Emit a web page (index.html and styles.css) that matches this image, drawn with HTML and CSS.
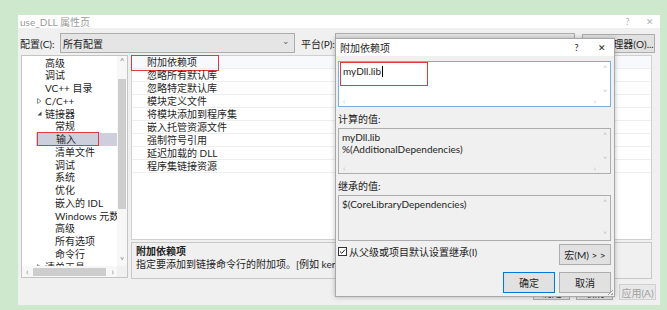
FILE: index.html
```html
<!DOCTYPE html>
<html lang="zh-CN">
<head>
    <meta charset="UTF-8">
    <title>use_DLL 属性页</title>
    <link rel="stylesheet" href="styles.css">
</head>
<body>

    <div class="window">
        <div class="titlebar">
            <span class="title">use_DLL 属性页</span>
            <span class="tb-btn">?</span>
            <span class="tb-btn close">✕</span>
        </div>

        <div class="config-row">
            <span class="cfg-label">配置(C):</span>
            <div class="combo cfg-combo">所有配置<span class="combo-arrow">⌄</span></div>
            <span class="plat-label">平台(P):</span>
            <div class="combo plat-combo">活动(Win32)</div>
            <div class="btn mgr-btn">配置管理器(O)...</div>
        </div>

        <div class="main">
            <div class="tree">
                <div class="tree-items">
                    <div class="ti l1">高级</div>
                    <div class="ti l1">调试</div>
                    <div class="ti l1">VC++ 目录</div>
                    <div class="ti l0"><span class="tw"><svg width="5" height="6" viewBox="0 0 5 6"><path d="M0.5 0.5 L4 3 L0.5 5.5 Z" fill="none" stroke="#777" stroke-width="0.8"/></svg></span>C/C++</div>
                    <div class="ti l0"><span class="tw"><svg width="5" height="5" viewBox="0 0 5 5"><path d="M4.5 0.5 L4.5 4.5 L0.5 4.5 Z" fill="#444"/></svg></span>链接器</div>
                    <div class="ti l2">常规</div>
                    <div class="ti l2 sel"><span class="mark-sel">输入</span></div>
                    <div class="ti l2">清单文件</div>
                    <div class="ti l2">调试</div>
                    <div class="ti l2">系统</div>
                    <div class="ti l2">优化</div>
                    <div class="ti l2">嵌入的 IDL</div>
                    <div class="ti l2">Windows 元数据</div>
                    <div class="ti l2">高级</div>
                    <div class="ti l2">所有选项</div>
                    <div class="ti l2">命令行</div>
                    <div class="ti l0"><span class="tw"><svg width="5" height="6" viewBox="0 0 5 6"><path d="M0.5 0.5 L4 3 L0.5 5.5 Z" fill="none" stroke="#777" stroke-width="0.8"/></svg></span>清单工具</div>
                </div>
                <div class="vscroll">
                    <span class="sa">˄</span>
                    <div class="vthumb"></div>
                    <span class="sa">˅</span>
                </div>
                <div class="hscroll">
                    <span class="sa">‹</span>
                    <div class="hthumb"></div>
                    <span class="sa">›</span>
                </div>
                <div class="corner"></div>
            </div>

            <div class="props">
                <div class="grid">
                    <div class="row first"><span class="name">附加依赖项</span><span class="mark-row"></span></div>
                    <div class="row"><span class="name">忽略所有默认库</span></div>
                    <div class="row"><span class="name">忽略特定默认库</span></div>
                    <div class="row"><span class="name">模块定义文件</span></div>
                    <div class="row"><span class="name">将模块添加到程序集</span></div>
                    <div class="row"><span class="name">嵌入托管资源文件</span></div>
                    <div class="row"><span class="name">强制符号引用</span></div>
                    <div class="row"><span class="name">延迟加载的 DLL</span></div>
                    <div class="row"><span class="name">程序集链接资源</span></div>
                </div>
                <div class="desc">
                    <div class="desc-title">附加依赖项</div>
                    <div class="desc-text">指定要添加到链接命令行的附加项。[例如 kernel32.lib]</div>
                </div>
            </div>
        </div>

        <div class="bottom-row">
            <div class="btn small-btn">确定</div>
            <div class="btn small-btn">取消</div>
            <div class="btn small-btn disabled">应用(A)</div>
        </div>
    </div>

    <!-- modal dialog over the property page -->
    <div class="dialog">
        <div class="dlg-title">
            <span class="title">附加依赖项</span>
            <span class="dlg-btn">?</span>
            <span class="dlg-btn">✕</span>
        </div>
        <div class="dlg-body">
            <div class="box edit">
                <div class="box-text"><span class="mark-edit">myDll.lib<span class="caret"></span></span></div>
                <span class="arr up">˄</span>
                <span class="arr down">˅</span>
                <span class="arr left">‹</span>
                <span class="arr right">›</span>
            </div>

            <div class="dlg-label">计算的值:</div>
            <div class="box readonly">
                <div class="box-text">myDll.lib<br>%(AdditionalDependencies)</div>
                <span class="arr up">˄</span>
                <span class="arr down">˅</span>
                <span class="arr left">‹</span>
                <span class="arr right">›</span>
            </div>

            <div class="dlg-label">继承的值:</div>
            <div class="box readonly">
                <div class="box-text">$(CoreLibraryDependencies)</div>
                <span class="arr up">˄</span>
                <span class="arr down down-end">˅</span>
            </div>

            <div class="inherit-row">
                <label class="check">
                    <svg width="9" height="9" viewBox="0 0 9 9"><rect x="0.5" y="0.5" width="8" height="8" fill="#fff" stroke="#333"/><path d="M2 4.6 L3.8 6.3 L7 2.6" fill="none" stroke="#222" stroke-width="1"/></svg>
                    从父级或项目默认设置继承(I)
                </label>
                <div class="btn dlg-btn-wide">宏(M) &gt; &gt;</div>
            </div>

            <div class="dlg-actions">
                <div class="btn dlg-btn-wide default">确定</div>
                <div class="btn dlg-btn-wide">取消</div>
            </div>
        </div>
        <span class="grip"></span>
    </div>

</body>
</html>
```

FILE: styles.css
```css
* {
    margin: 0;
    padding: 0;
    box-sizing: border-box;
}

body {
    width: 667px;
    height: 310px;
    overflow: hidden;
    position: relative;
    background: #cde8cd;
    font-family: Lato, "Noto Sans CJK SC", sans-serif;
    font-size: 10px;
    color: #1e1e1e;
    padding: 15px 0 0 18px;
}

.window {
    width: 642px;
    height: 290px;
    background: #f0f0f0;
    display: flex;
    flex-direction: column;
}

.titlebar {
    height: 13px;
    background: #fff;
    display: flex;
    align-items: center;
    padding-left: 2px;
    color: #9a9a9a;
}

.titlebar .title {
    flex: 1;
}

.tb-btn {
    width: 25px;
    text-align: center;
    font-size: 9px;
    color: #b0b0b0;
}

.tb-btn.close {
    width: 20px;
}

.config-row {
    display: flex;
    align-items: center;
    height: 20px;
    margin-top: 5px;
    padding-left: 2px;
}

.cfg-label {
    width: 40px;
}

.combo {
    height: 20px;
    background: #e5e5e5;
    border: 1px solid #adadad;
    display: flex;
    align-items: center;
    padding-left: 2px;
    position: relative;
}

.cfg-combo {
    width: 235px;
}

.combo-arrow {
    position: absolute;
    right: 4px;
    top: 0;
    line-height: 14px;
    color: #666;
    font-size: 9px;
}

.plat-label {
    width: 34px;
    margin-left: 6px;
}

.plat-combo {
    width: 240px;
}

.btn {
    background: #e1e1e1;
    border: 1px solid #adadad;
    display: flex;
    align-items: center;
    justify-content: center;
}

.mgr-btn {
    width: 73px;
    height: 19px;
    margin-left: 7px;
}

.main {
    display: flex;
    margin-top: 2px;
    padding-left: 3px;
    gap: 3px;
    height: 224px;
}

.tree {
    width: 107px;
    height: 223px;
    background: #fff;
    border: 1px solid #c4c4c4;
    position: relative;
    overflow: hidden;
}

.tree-items {
    padding-top: 0.5px;
    width: 96px;
    overflow: hidden;
    white-space: nowrap;
}

.ti {
    height: 12.75px;
    line-height: 12.75px;
    display: flex;
    align-items: center;
}

.l0 { padding-left: 15px; }
.l1 { padding-left: 23px; }
.l2 { padding-left: 33px; }

.tw {
    width: 8px;
    display: flex;
    align-items: center;
}

.ti.sel {
    background: #cdd0dc;
    margin-left: 14px;
    padding-left: 0;
}

.mark-sel {
    display: block;
    width: 62px;
    height: 14px;
    line-height: 12px;
    padding-left: 18px;
    margin-left: 1px;
    border: 1.5px solid #e0393e;
}

.vscroll {
    position: absolute;
    right: 0;
    top: 0;
    bottom: 11px;
    width: 10px;
    background: #f7f7f7;
    display: flex;
    flex-direction: column;
    align-items: center;
}

.vthumb {
    width: 8px;
    margin-top: 12px;
    height: 130px;
    background: #cdcdcd;
    flex: none;
}

.vscroll .sa:last-child {
    margin-top: auto;
}

.sa {
    color: #8a8a8a;
    font-size: 9px;
    line-height: 11px;
}

.hscroll {
    position: absolute;
    left: 0;
    right: 10px;
    bottom: 0;
    height: 11px;
    background: #f7f7f7;
    display: flex;
    align-items: center;
    padding: 0 3px 0 4px;
}

.hthumb {
    width: 73px;
    height: 8px;
    background: #cdcdcd;
    margin-left: 4px;
    margin-right: auto;
}

.corner {
    position: absolute;
    right: 0;
    bottom: 0;
    width: 10px;
    height: 11px;
    background: #f0f0f0;
}

.props {
    width: 521px;
    display: flex;
    flex-direction: column;
    gap: 2px;
}

.grid {
    height: 185px;
    background: #fff;
    border: 1px solid #d0d0d0;
}

.row {
    height: 13px;
    line-height: 12px;
    border-bottom: 1px solid #eeeeee;
    padding-left: 15px;
    position: relative;
}

.row.first {
    background: #f7f9fc;
}

.mark-row {
    position: absolute;
    left: -1px;
    top: -1px;
    width: 88px;
    height: 16px;
    border: 1.5px solid #e0393e;
}

.desc {
    height: 37px;
    border: 1px solid #c8c8c8;
    background: #f0f0f0;
    padding: 2px 4px;
    line-height: 13px;
    white-space: nowrap;
    overflow: hidden;
}

.desc-title {
    font-weight: bold;
}

.bottom-row {
    display: flex;
    justify-content: flex-end;
    gap: 6px;
    margin-top: 5px;
    padding-right: 4px;
}

.small-btn {
    width: 37px;
    height: 16px;
}

.small-btn.disabled {
    color: #a0a0a0;
    border-color: #d0d0d0;
    background: #e8e8e8;
}

.dialog {
    position: absolute;
    left: 335px;
    top: 38px;
    width: 280px;
    height: 259px;
    background: #f0f0f0;
    border: 1px solid #a8a8a8;
    box-shadow: 0 0 5px rgba(0, 0, 0, 0.25);
}

.dlg-title {
    height: 17px;
    background: #fff;
    display: flex;
    align-items: center;
    padding-left: 4px;
}

.dlg-title .title {
    flex: 1;
}

.dlg-btn {
    width: 25px;
    text-align: center;
    font-size: 9px;
}

.dlg-body {
    padding: 5px 3px 0 2px;
}

.box {
    position: relative;
    height: 46px;
    border: 1px solid #adadad;
}

.box.edit {
    background: #fff;
    border-color: #78aee6;
}

.box.readonly {
    background: #f0f0f0;
}

.box-text {
    padding: 2px 3px;
    line-height: 12px;
}

.mark-edit {
    display: block;
    width: 88px;
    height: 24px;
    margin: -2px 0 0 -2px;
    padding: 2px 0 0 2px;
    border: 1.5px solid #e0393e;
}

.caret {
    display: inline-block;
    width: 1px;
    height: 11px;
    background: #000;
    vertical-align: -2px;
    margin-left: 1px;
}

.arr {
    position: absolute;
    color: #b8b8b8;
    font-size: 8px;
    line-height: 8px;
}

.arr.up { right: 3px; top: 2px; }
.arr.down { right: 3px; bottom: 10px; }
.arr.down-end { bottom: 2px; }
.arr.left { left: 4px; bottom: 1px; }
.arr.right { right: 14px; bottom: 1px; }

.dlg-label {
    height: 13px;
    line-height: 13px;
    margin-top: 6px;
    margin-bottom: 2px;
}

.inherit-row {
    display: flex;
    align-items: center;
    justify-content: space-between;
    margin-top: 3px;
}

.check {
    display: flex;
    align-items: center;
    gap: 2px;
    margin-top: -6px;
}

.dlg-btn-wide {
    width: 52px;
    height: 21px;
}

.dlg-actions {
    display: flex;
    justify-content: flex-end;
    gap: 4px;
    margin-top: 7px;
}

.btn.default {
    border: 1px solid #0078d7;
    box-shadow: inset 0 0 0 1px #cfe3f7;
}

.grip {
    position: absolute;
    right: 1px;
    bottom: 1px;
    width: 6px;
    height: 6px;
    background: linear-gradient(135deg, transparent 55%, #a0a0a0 55%, #a0a0a0 65%, transparent 65%, transparent 80%, #a0a0a0 80%);
}
```
